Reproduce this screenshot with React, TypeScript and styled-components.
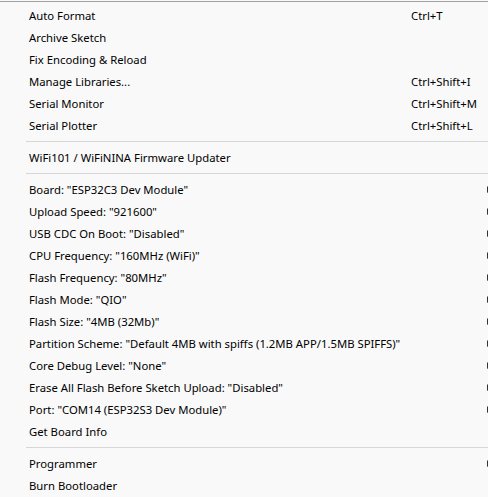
import React from "react";
import styled, { createGlobalStyle } from "styled-components";

const Global = createGlobalStyle`
  html, body { margin: 0; padding: 0; background: #f9f9f9; overflow: hidden; }
  #root { width: 488px; height: 497px; overflow: hidden; }
`;

const Menu = styled.div`
  margin-top: 1px;
  border-top: 1px solid #a0a0a0;
  padding-top: 2px;
  width: 520px;
  background: #f9f9f9;
  display: flex;
  flex-direction: column;
  font-family: "Noto Sans", "Open Sans", sans-serif;
  font-size: 11.3px;
  color: #000;
`;

const Item = styled.div`
  height: 22px;
  display: grid;
  grid-template-columns: 382px 76px auto;
  align-items: center;
  padding-left: 29px;
  white-space: nowrap;
`;

const Label = styled.span``;
const Shortcut = styled.span``;

const Arrow = styled.svg`
  width: 5px;
  height: 7px;
`;

const Separator = styled.div`
  height: 10px;
  display: flex;
  align-items: center;
  padding-left: 26px;
  &::after {
    content: "";
    flex: 1;
    height: 1px;
    background: #d7d7d7;
  }
`;

type Entry = { label: string; shortcut?: string; sub?: boolean } | "sep";

const entries: Entry[] = [
  { label: "Auto Format", shortcut: "Ctrl+T" },
  { label: "Archive Sketch" },
  { label: "Fix Encoding & Reload" },
  { label: "Manage Libraries...", shortcut: "Ctrl+Shift+I" },
  { label: "Serial Monitor", shortcut: "Ctrl+Shift+M" },
  { label: "Serial Plotter", shortcut: "Ctrl+Shift+L" },
  "sep",
  { label: "WiFi101 / WiFiNINA Firmware Updater" },
  "sep",
  { label: 'Board: "ESP32C3 Dev Module"', sub: true },
  { label: 'Upload Speed: "921600"', sub: true },
  { label: 'USB CDC On Boot: "Disabled"', sub: true },
  { label: 'CPU Frequency: "160MHz (WiFi)"', sub: true },
  { label: 'Flash Frequency: "80MHz"', sub: true },
  { label: 'Flash Mode: "QIO"', sub: true },
  { label: 'Flash Size: "4MB (32Mb)"', sub: true },
  { label: 'Partition Scheme: "Default 4MB with spiffs (1.2MB APP/1.5MB SPIFFS)"', sub: true },
  { label: 'Core Debug Level: "None"', sub: true },
  { label: 'Erase All Flash Before Sketch Upload: "Disabled"', sub: true },
  { label: 'Port: "COM14 (ESP32S3 Dev Module)"', sub: true },
  { label: "Get Board Info" },
  "sep",
  { label: "Programmer", sub: true },
  { label: "Burn Bootloader" },
];

export default function App() {
  return (
    <>
      <Global />
      <Menu>
        {entries.map((e, i) =>
          e === "sep" ? (
            <Separator key={i} />
          ) : (
            <Item key={i}>
              <Label>{e.label}</Label>
              <Shortcut>{e.shortcut ?? ""}</Shortcut>
              {e.sub ? (
                <Arrow viewBox="0 0 5 7">
                  <path d="M0 0 L4 3.5 L0 7 Z" fill="#333" />
                </Arrow>
              ) : (
                <span />
              )}
            </Item>
          )
        )}
      </Menu>
    </>
  );
}
